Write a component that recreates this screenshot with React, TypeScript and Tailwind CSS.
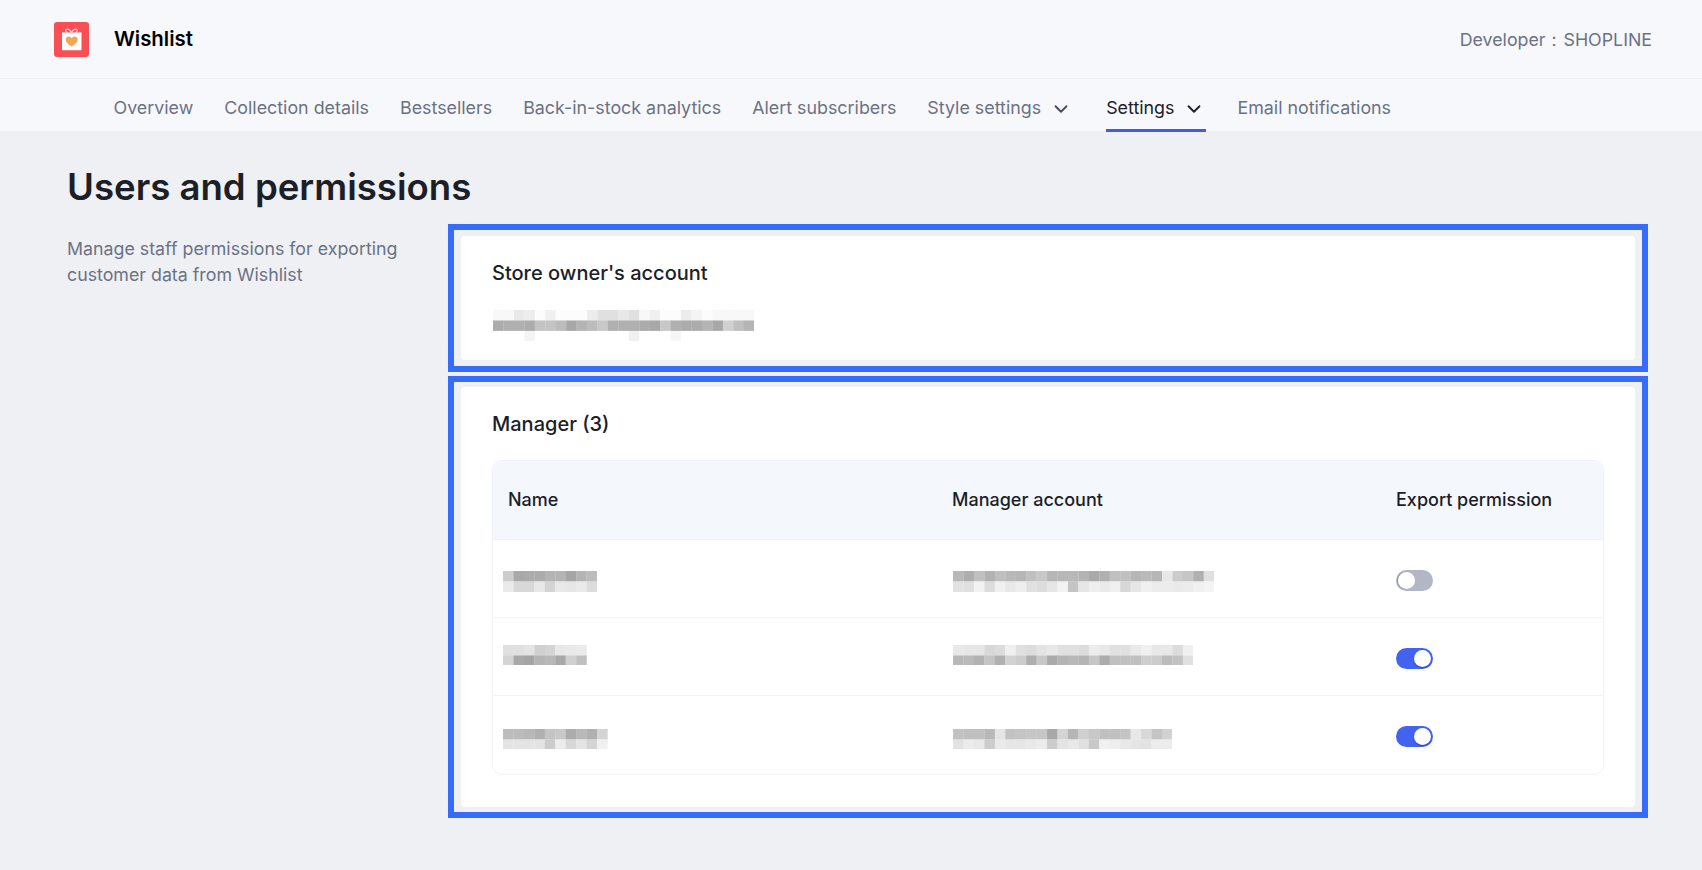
import { ChevronDown } from "lucide-react";
import type { ReactNode } from "react";

type NavItem = {
  label: string;
  hasMenu?: boolean;
  active?: boolean;
  spacing?: string;
};

type Manager = {
  name: string[][];
  account: string[][];
  enabled: boolean;
  offset: string;
  rowHeight: string;
};

const navItems: NavItem[] = [
  { label: "Overview" },
  { label: "Collection details" },
  { label: "Bestsellers" },
  { label: "Back-in-stock analytics" },
  { label: "Alert subscribers" },
  { label: "Style settings", hasMenu: true, spacing: "mr-[3px]" },
  { label: "Settings", hasMenu: true, active: true, spacing: "pr-[1px]" },
  { label: "Email notifications" },
];

// blurred-out emails and names from the screenshot, one gray value per cell
const ownerEmail = [
  "f8 f8 e8 ec fc f0 fc fc fc ec e0 e0 e8 e0 f8 f0 fc fc ec f4 fc f8 f8 f8 f8".split(" "),
  "ac b0 b0 ac c4 c4 bc a8 b4 bc c8 b0 b0 b0 ac a8 c8 b0 ac ac b4 a8 d0 c0 b4".split(" "),
  "ff ff ff f4 ff ff ff ff ff ff ff ff ff f0 ff ff ff f6 ff ff ff ff ff ff ff".split(" "),
];

const managers: Manager[] = [
  {
    name: [
      "cd a9 ab ab b4 b4 a6 b4 bc".split(" "),
      "ea d8 d8 e8 d4 e8 e6 ea dc".split(" "),
    ],
    account: [
      "b8 ae c0 b2 bf b8 b6 c0 c8 b6 b8 b8 b4 aa b0 c0 c0 b6 ba b6 e8 cc c6 b0 e0".split(" "),
      "e2 e0 f2 dc f0 e8 ee e0 dc e6 f2 c4 e6 ee ea f0 d8 e6 f0 ec ec ea ec f0 f4".split(" "),
    ],
    enabled: false,
    offset: "mt-[6px]",
    rowHeight: "h-[78px]",
  },
  {
    name: [
      "e0 e0 e4 d0 d4 e8 ea ea".split(" "),
      "d4 a8 a4 b4 b8 a8 d0 c0".split(" "),
    ],
    account: [
      "e8 e6 e6 d8 dc f0 e0 dc e4 e8 e0 e0 dc ec e8 e0 e0 ea f0 e8 e8 dc f0".split(" "),
      "b8 ba b2 c4 b0 d2 cc ae c8 aa b4 b8 b4 c6 ac c0 c0 c0 ce cc bc c2 e0".split(" "),
    ],
    enabled: true,
    offset: "-mt-[3px]",
    rowHeight: "h-[78px]",
  },
  {
    name: [
      "bc bc b8 b0 c4 c8 ac b8 b0 d4".split(" "),
      "e4 e4 e4 e4 cc ec d8 e4 d4 f0".split(" "),
    ],
    account: [
      "c2 c0 c0 b8 e4 c2 c4 c6 c6 a8 d4 b6 d0 c8 c0 c0 c4 e8 d8 c4 d2".split(" "),
      "e2 ec e8 cc ea e6 e6 e8 ec cc e4 e8 e0 c8 f0 ee e8 e4 e2 ec ec".split(" "),
    ],
    enabled: true,
    offset: "mt-[8px]",
    rowHeight: "h-[79px]",
  },
];

function WishlistLogo() {
  return (
    <svg width="35" height="35" viewBox="0 0 35 35" aria-hidden="true">
      <rect width="35" height="35" rx="3" fill="#f65056" />
      <path
        d="M17.500 10.500c-1.500-2.600-3.500-3.700-5-3.200-1.400.5-1 2.400 1 3.200M17.500 10.500c1.500-2.600 3.500-3.700 5-3.200 1.400.5 1 2.400-1 3.200"
        fill="none"
        stroke="#fbd5d6"
        strokeWidth="1.2"
      />
      <path d="M8 10.500h19.500v17a.8.8 0 0 1-.8.8H8.800a.8.8 0 0 1-.8-.8z" fill="#fff" />
      <path
        d="M17.700 24.500c-3.400-2-6-4.300-6-7 0-1.900 1.400-3 3-3 1.200 0 2.300.6 3 1.800.7-1.200 1.800-1.800 3-1.800 1.600 0 3 1.100 3 3 0 2.700-2.600 5-6 7z"
        fill="#f7a455"
      />
    </svg>
  );
}

function Mosaic({ rows, className }: { rows: string[][]; className?: string }) {
  const cell = 10.45;
  const cols = rows[0].length;
  return (
    <svg
      className={className}
      width={cols * cell}
      height={rows.length * cell}
      viewBox={`0 0 ${cols * cell} ${rows.length * cell}`}
      aria-hidden="true"
    >
      {rows.map((row, y) =>
        row.map((gray, x) => (
          <rect
            key={`${x}-${y}`}
            x={x * cell}
            y={y * cell}
            width={cell + 0.2}
            height={cell + 0.2}
            fill={`#${gray}${gray}${gray}`}
          />
        )),
      )}
    </svg>
  );
}

function Toggle({ enabled }: { enabled: boolean }) {
  return (
    <span
      className={`mt-[3px] flex h-[21px] w-[37px] items-center rounded-full px-[2px] ${
        enabled ? "justify-end bg-[#4262f0]" : "justify-start bg-[#b2b6c5]"
      }`}
    >
      <span
        className={`h-[17px] w-[17px] rounded-full bg-white ${
          enabled ? "shadow-[0_1px_1px_#2f45b0]" : "shadow-[-1px_0_1px_#8e92a0]"
        }`}
      />
    </span>
  );
}

function Frame({ children, className }: { children: ReactNode; className: string }) {
  return <section className={`border-[6px] border-[#376cfb] px-[7px] ${className}`}>{children}</section>;
}

export default function App() {
  return (
    <div className="flex min-h-screen flex-col bg-[#eff0f4] [font-family:Inter,sans-serif]">
      <header className="flex h-[79px] items-center justify-between border-b border-[#f0f1f6] bg-[#f7f8fc] pl-[54px] pr-[50px]">
        <div className="flex items-center gap-[25px]">
          <WishlistLogo />
          <span className="text-[20.4px] font-semibold text-black">Wishlist</span>
        </div>
        <span className="pt-[3px] text-[17.8px] text-[#6b7284]">Developer：SHOPLINE</span>
      </header>

      <nav className="flex h-[52px] gap-[31px] bg-[#f7f8fc] pl-[113.5px]">
        {navItems.map((item) => (
          <a
            key={item.label}
            className={`flex h-[53px] items-center gap-[9px] border-b-[3px] pt-[9px] text-[17.85px] ${
              item.active
                ? "border-[#3f5fdc] text-[#1c1e28]"
                : "border-transparent text-[#6b7284]"
            } ${item.spacing ?? ""}`}
            href="#"
          >
            {item.label}
            {item.hasMenu ? (
              <ChevronDown className={item.active ? "text-[#1c1e28]" : "text-[#444a5a]"} size={22} strokeWidth={2} />
            ) : null}
          </a>
        ))}
      </nav>

      <main className="px-[67px] pt-[34px]">
        <h1 className="text-[36.6px] font-semibold leading-[44px] text-[#1c1e28]">
          Users and permissions
        </h1>

        <div className="mt-[15px] flex">
          <p className="w-[381px] shrink-0 pr-[40px] pt-[12px] text-[17.8px] leading-[26px] text-[#6b7284]">
            Manage staff permissions for exporting customer data from Wishlist
          </p>

          <div className="flex w-[1200px] shrink-0 flex-col gap-[4px]">
            <Frame className="py-[6px]">
              <div className="h-[124px] rounded-[4px] bg-white px-[31px] pt-[22px]">
                <h2 className="text-[20px] font-medium leading-[30px] text-[#1c1e28]">
                  Store owner's account
                </h2>
                <Mosaic className="ml-[1px] mt-[22px]" rows={ownerEmail} />
              </div>
            </Frame>

            <Frame className="py-[5px]">
              <div className="rounded-[4px] bg-white px-[31px] pb-[32px] pt-[22px]">
                <h2 className="text-[20px] font-medium leading-[30px] text-[#1c1e28]">Manager (3)</h2>

                <div className="mt-[21px] overflow-hidden rounded-[10px] border border-[#f1f2f5]">
                  <div className="grid h-[78px] grid-cols-[459px_444px_1fr] items-center bg-[#f4f7fc] pb-[2px] text-[18px] font-medium text-[#1c1e28]">
                    <span className="pl-[15px]">Name</span>
                    <span>Manager account</span>
                    <span>Export permission</span>
                  </div>

                  {managers.map((manager, index) => (
                    <div
                      key={index}
                      className={`grid grid-cols-[459px_444px_1fr] items-center border-t border-[#f1f2f5] bg-white ${manager.rowHeight}`}
                    >
                      <div className="pl-[10px]">
                        <Mosaic className={manager.offset} rows={manager.name} />
                      </div>
                      <div className="pl-[1px]">
                        <Mosaic className={manager.offset} rows={manager.account} />
                      </div>
                      <Toggle enabled={manager.enabled} />
                    </div>
                  ))}
                </div>
              </div>
            </Frame>
          </div>
        </div>
      </main>
    </div>
  );
}
